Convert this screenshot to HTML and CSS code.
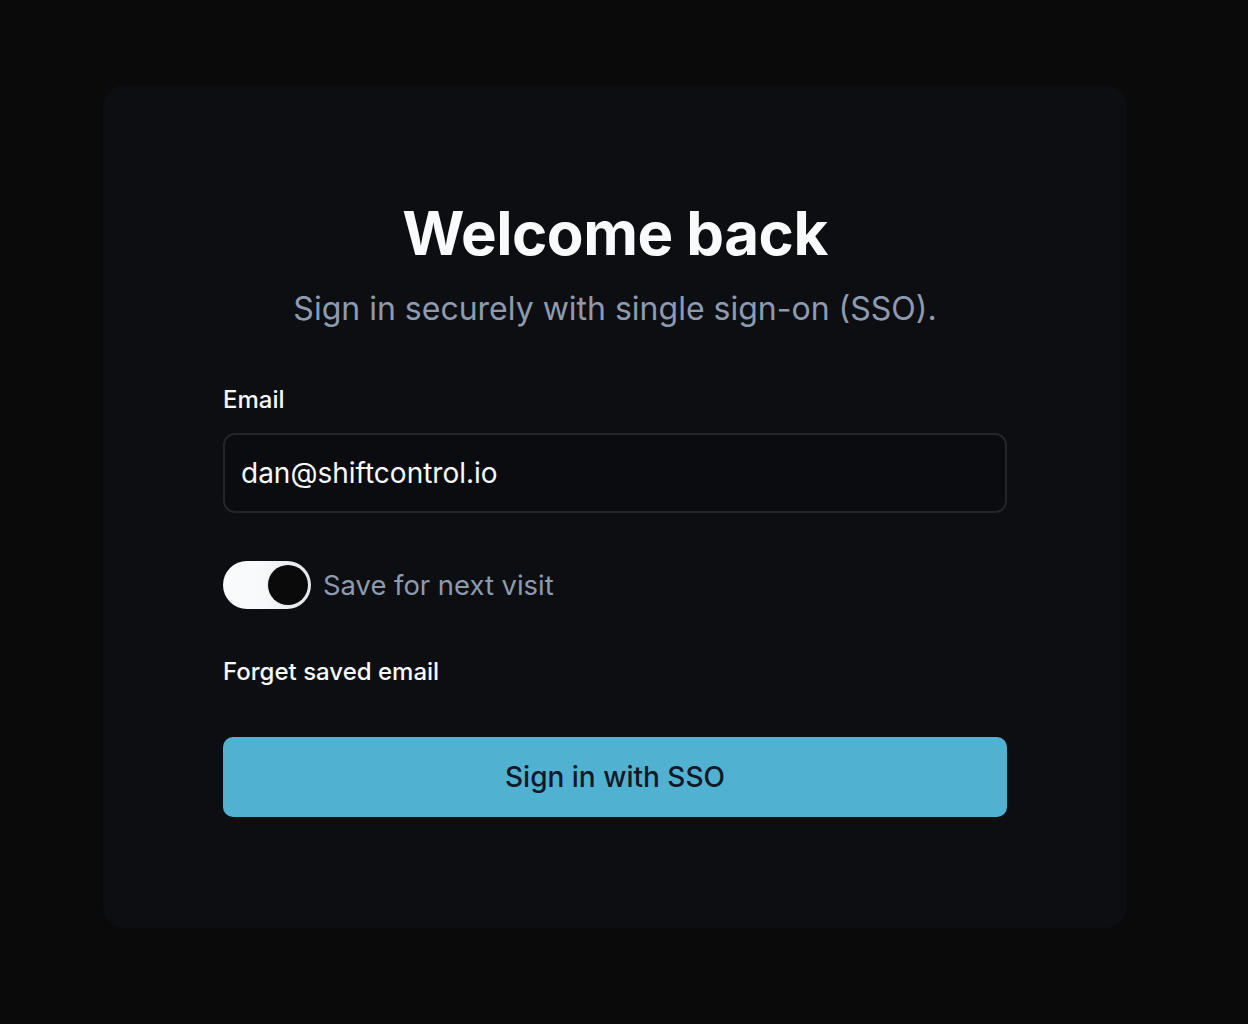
FILE: index.html
```html
<!DOCTYPE html>
<html lang="en">
<head>
<meta charset="utf-8">
<title>Welcome back</title>
<link rel="stylesheet" href="styles.css">
</head>
<body>
<main class="page">
  <section class="card">
    <header class="head">
      <h1 class="title">Welcome back</h1>
      <p class="subtitle">Sign in securely with single sign-on (SSO).</p>
    </header>
    <form class="form">
      <label class="label" for="email">Email</label>
      <div class="input" id="email">dan@shiftcontrol.io</div>
      <div class="toggle-row">
        <span class="toggle"><span class="knob"></span></span>
        <span class="toggle-text">Save for next visit</span>
      </div>
      <div class="forget">Forget saved email</div>
      <div class="button">Sign in with SSO</div>
    </form>
  </section>
</main>
</body>
</html>
```
FILE: styles.css
```css
* { box-sizing: border-box; }
html, body { margin: 0; padding: 0; }
body {
  background: #0a0a0a;
  font-family: Inter, "Noto Sans", sans-serif;
  color: #f8fafc;
  width: 1248px;
  height: 1024px;
}
.page {
  padding: 85px 0 0 103px;
}
.card {
  width: 1024px;
  height: 843px;
  background: #0d0e12;
  border-radius: 22px;
  padding: 116px 120px 0;
}
.head { text-align: center; }
.title {
  margin: 0;
  font-size: 60px;
  font-weight: 700;
  line-height: 64px;
  letter-spacing: -0.5px;
  color: #f8fafc;
}
.subtitle {
  margin: 24px 0 0;
  font-size: 32px;
  line-height: 40px;
  color: #8d9bb0;
}
.form { display: flex; flex-direction: column; margin-top: 56px; }
.label {
  font-size: 24px;
  line-height: 30px;
  font-weight: 500;
  color: #f8fafc;
}
.input {
  margin-top: 18px;
  height: 80px;
  border: 2px solid #23252b;
  border-radius: 12px;
  background: #0b0c0f;
  padding: 0 16px;
  display: flex;
  align-items: center;
  font-size: 28px;
  color: #f8fafc;
}
.toggle-row {
  margin-top: 48px;
  display: flex;
  align-items: center;
  gap: 12px;
}
.toggle {
  width: 88px;
  height: 48px;
  border-radius: 24px;
  background: linear-gradient(90deg, #f8fafc 40%, #e2e5ea 100%);
  display: flex;
  align-items: center;
  justify-content: flex-end;
  padding: 0 3px;
}
.knob {
  width: 40px;
  height: 40px;
  border-radius: 50%;
  background: #0a0a0a;
  box-shadow: 0 0 0 1px #e9ecef;
}
.toggle-text {
  font-size: 27.4px;
  color: #8d9bb0;
}
.forget {
  margin-top: 48px;
  font-size: 24px;
  line-height: 30px;
  font-weight: 500;
  color: #f8fafc;
}
.button {
  margin-top: 50px;
  height: 80px;
  border-radius: 10px;
  background: #50b2d0;
  color: #111827;
  font-size: 28px;
  font-weight: 500;
  display: flex;
  align-items: center;
  justify-content: center;
}
```
